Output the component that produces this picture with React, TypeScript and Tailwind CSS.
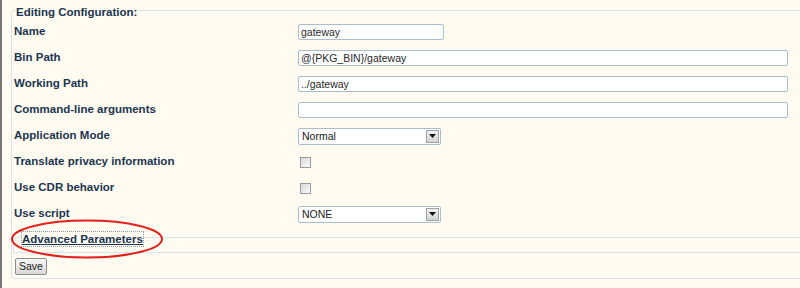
import React from 'react';

const labelCls = 'w-[286px] -mt-[2px] pl-[2px] text-[11.5px] font-bold text-[#1b3550] leading-[14px]';

const TextField = ({ value, wide }: { value: string; wide?: boolean }) => (
  <input
    readOnly
    value={value}
    className={`h-[16px] ${wide ? 'w-[490px]' : 'w-[146px]'} border border-[#a9bdcd] rounded-[2px] bg-white px-[2px] text-[10.5px] text-[#2a2a2a] leading-[14px] outline-none`}
  />
);

const SelectBox = ({ value }: { value: string }) => (
  <div className="flex h-[17px] w-[143px] items-center border border-[#a9bdcd] rounded-[2px] bg-white">
    <span className="flex-1 pl-[3px] text-[10.5px] text-[#1a1a1a] leading-[14px]">{value}</span>
    <span className="mr-[1px] flex h-[13px] w-[13px] items-center justify-center border border-[#a0a0a0] bg-gradient-to-b from-[#f0f0f0] to-[#d4d4d4]">
      <svg width="7" height="4" viewBox="0 0 7 4">
        <path d="M0 0 L7 0 L3.5 4 Z" fill="#111" />
      </svg>
    </span>
  </div>
);

const CheckBox = () => (
  <span className="ml-[2px] block h-[11px] w-[11px] border border-[#9c9c9c] bg-gradient-to-br from-[#d8d8d8] to-[#fbfbfb]" />
);

const Row = ({ label, children }: { label: string; children: React.ReactNode }) => (
  <div className="flex h-[26px] items-center">
    <div className={labelCls}>{label}</div>
    <div className="flex items-center">{children}</div>
  </div>
);

export default function App() {
  return (
    <div className="relative h-[288px] w-[800px] overflow-hidden border-l-2 border-[#767676] bg-[#fffbf0] font-['Liberation_Sans',Arial,sans-serif]">
      <fieldset className="ml-[9px] mt-[1px] w-[820px] rounded-[3px] border border-[#d9e3e8] pb-[1px]">
        <legend className="ml-[3px] px-[1px] pt-[4px] text-[11.5px] font-bold leading-[14px] text-[#1b3550]">
          Editing Configuration:
        </legend>
        <div>
          <Row label="Name"><TextField value="gateway" /></Row>
          <Row label="Bin Path"><TextField value="@{PKG_BIN}/gateway" wide /></Row>
          <Row label="Working Path"><TextField value="../gateway" wide /></Row>
          <Row label="Command-line arguments"><TextField value="" wide /></Row>
          <Row label="Application Mode"><SelectBox value="Normal" /></Row>
          <Row label="Translate privacy information"><CheckBox /></Row>
          <Row label="Use CDR behavior"><CheckBox /></Row>
          <Row label="Use script"><SelectBox value="NONE" /></Row>
        </div>
        <fieldset className="ml-[1px] mt-[1px] border border-[#d9e3e8] pb-[6px]">
          <legend className="ml-[8px] pt-[4px] text-[11.5px] font-bold text-[#1b3550]">
            <span className="block leading-[14px] underline outline outline-1 outline-dotted outline-[#8a9aa8]">
              Advanced Parameters
            </span>
          </legend>
        </fieldset>
        <button className="ml-[3px] mt-[4px] h-[17px] w-[32px] rounded-[2px] border border-[#8c8c8c] bg-gradient-to-b from-[#f7f7f7] to-[#d9d9d9] text-[10.5px] leading-[14px] text-[#222]">
          Save
        </button>
      </fieldset>
      <svg className="pointer-events-none absolute left-[8px] top-[218px]" width="160" height="42" viewBox="0 0 160 42">
        <ellipse cx="77" cy="21" rx="75" ry="18.5" fill="none" stroke="#e3201b" strokeWidth="2" />
      </svg>
    </div>
  );
}
